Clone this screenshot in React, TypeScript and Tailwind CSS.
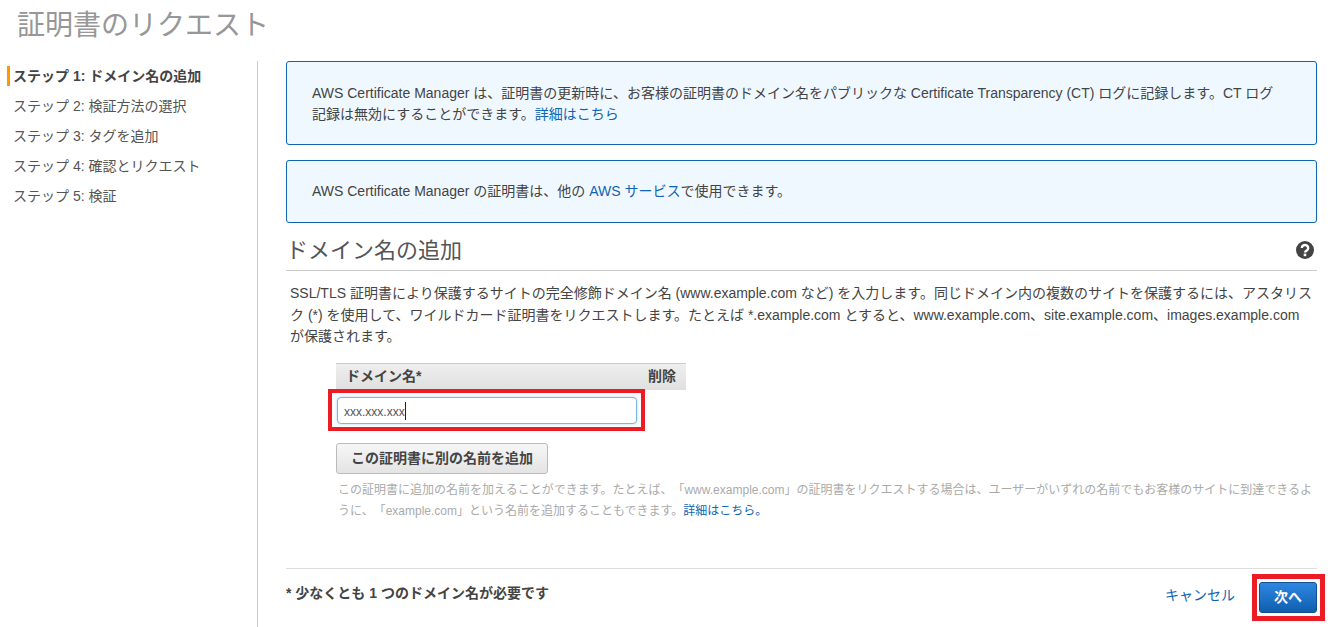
import React from 'react';

const font = { fontFamily: '"Liberation Sans", "Noto Sans CJK JP", sans-serif' };

const steps = ['ステップ 1: ドメイン名の追加', 'ステップ 2: 検証方法の選択', 'ステップ 3: タグを追加', 'ステップ 4: 確認とリクエスト', 'ステップ 5: 検証'];

const Link: React.FC<{ children: React.ReactNode }> = ({ children }) => (
  <a className="text-[#0f64b4]">{children}</a>
);

export default function App() {
  return (
    <div style={font} className="w-[1333px] h-[627px] overflow-hidden bg-white text-[#444] [text-spacing-trim:space-all]">
      <h1 className="h-[61px] pl-[17px] pt-[6px] text-[28px] leading-[40px] text-[#979797]">証明書のリクエスト</h1>
      <div className="flex h-[566px]">
        <nav className="flex w-[258px] shrink-0 flex-col gap-[10px] border-r border-[#ccc] pt-[5px]">
          {steps.map((s, i) => (
            <div
              key={s}
              className={`ml-[7px] h-[20px] text-[14px] leading-[20px] ${i === 0 ? 'border-l-[3px] border-[#f90] pl-[3px] font-bold' : 'pl-[6px] text-[#555]'}`}
            >
              {s}
            </div>
          ))}
        </nav>
        <main className="ml-[28px] w-[1031px]">
          <div className="h-[84px] rounded-[3px] border border-[#0f64b4] bg-[#f0f8ff] pl-[25px] pr-[30px] pt-[21px] text-[14px] leading-[21px]">
            AWS Certificate Manager は、証明書の更新時に、お客様の証明書のドメイン名をパブリックな Certificate Transparency (CT) ログに記録します。CT ログ記録は無効にすることができます。<Link>詳細はこちら</Link>
          </div>
          <div className="mt-[15px] h-[63px] rounded-[3px] border border-[#0f64b4] bg-[#f0f8ff] pl-[25px] pt-[20px] text-[14px] leading-[21px]">
            AWS Certificate Manager の証明書は、他の <Link>AWS サービス</Link>で使用できます。
          </div>
          <div className="mt-[11px] flex h-[37px] items-center justify-between border-b border-[#ccc] pb-[3px]">
            <h2 className="text-[22px] leading-[32px] text-[#555]">ドメイン名の追加</h2>
            <svg width="18" height="18" viewBox="0 0 18 18" className="mb-[2px] mr-[3px]">
              <circle cx="9" cy="9" r="9" fill="#444" />
              <path d="M5.8 7a3.2 3 0 1 1 4.8 2.6c-1 .6-1.6 1-1.6 2" fill="none" stroke="#fff" strokeWidth="2.4" />
              <rect x="7.7" y="12.6" width="2.6" height="2.6" fill="#fff" />
            </svg>
          </div>
          <p className="mt-[12px] pl-[4px] text-[14px] leading-[21.5px]">
            SSL/TLS 証明書により保護するサイトの完全修飾ドメイン名 (www.example.com など) を入力します。同じドメイン内の複数のサイトを保護するには、アスタリスク (*) を使用して、ワイルドカード証明書をリクエストします。たとえば *.example.com とすると、www.example.com、site.example.com、images.example.com が保護されます。
          </p>
          <div className="ml-[50px] mt-[15px] w-[350px]">
            <div className="flex h-[27px] items-center justify-between border-t border-[#ccc] bg-gradient-to-b from-[#eee] to-[#e0e0e0] px-[10px] text-[14px] font-bold">
              <span>ドメイン名*</span>
              <span>削除</span>
            </div>
            <div className="relative ml-[1px] mt-[7px] h-[27px] w-[300px] rounded-[4px] border border-[#7ab8ec] bg-white pl-[6px] text-[12px] leading-[25px] text-[#555] shadow-[0_0_3px_#a8d4f5]">
              xxx.xxx.xxx<span className="inline-block h-[18px] w-px translate-y-[4px] bg-[#222]" />
              <div className="absolute left-[-10px] top-[-9px] h-[42px] w-[317px] border-[4px] border-[#ed1c24]" />
            </div>
          </div>
          <button className="ml-[50px] mt-[19px] h-[31px] w-[212px] rounded-[3px] border border-[#bbb] bg-gradient-to-b from-[#f6f6f6] to-[#e4e4e4] text-[14px] font-bold text-[#444]">
            この証明書に別の名前を追加
          </button>
          <p className="ml-[52px] mt-[6px] text-[12px] leading-[21px] text-[#aaa]">
            この証明書に追加の名前を加えることができます。たとえば、「www.example.com」の証明書をリクエストする場合は、ユーザーがいずれの名前でもお客様のサイトに到達できるように、「example.com」という名前を追加することもできます。<Link>詳細はこちら。</Link>
          </p>
          <div className="mt-[46px] flex h-[59px] items-start justify-between border-t border-[#ddd] pt-[14px]">
            <span className="text-[14px] font-bold leading-[21px] text-[#444]">* 少なくとも 1 つのドメイン名が必要です</span>
            <div className="-mt-[1px] flex items-center">
              <Link><span className="mb-[3px] block text-[14px]">キャンセル</span></Link>
              <button className="relative ml-[24px] h-[31px] w-[58px] rounded-[3px] border border-[#15508c] bg-gradient-to-b from-[#2d87e2] to-[#0f5fae] text-[14px] font-bold text-white">
                次へ
                <div className="absolute left-[-8px] top-[-9px] h-[47px] w-[73px] border-[5px] border-[#ed1c24]" />
              </button>
            </div>
          </div>
        </main>
      </div>
    </div>
  );
}
